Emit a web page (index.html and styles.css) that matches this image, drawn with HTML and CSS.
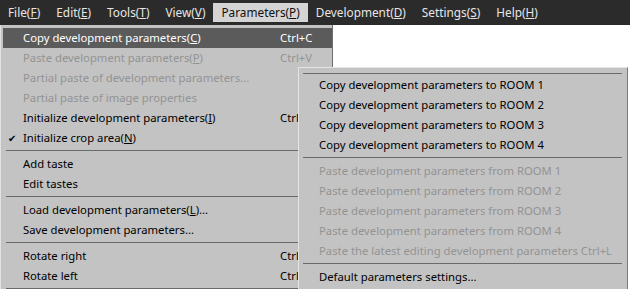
FILE: index.html
```html
<!DOCTYPE html>
<html lang="en">
<head>
    <meta charset="UTF-8">
    <title>Parameters menu</title>
    <link rel="stylesheet" href="styles.css">
</head>
<body>
<!-- Top menu bar -->
<nav class="menubar">
    <span class="bar-item">File(<u>F</u>)</span>
    <span class="bar-item">Edit(<u>E</u>)</span>
    <span class="bar-item">Tools(<u>T</u>)</span>
    <span class="bar-item">View(<u>V</u>)</span>
    <span class="bar-item open">Parameters(<u>P</u>)</span>
    <span class="bar-item">Development(<u>D</u>)</span>
    <span class="bar-item">Settings(<u>S</u>)</span>
    <span class="bar-item">Help(<u>H</u>)</span>
</nav>

<div class="stage">
    <!-- Parameters dropdown -->
    <ul class="menu main-menu">
        <li class="item active"><span class="label">Copy development parameters(<u>C</u>)</span><span class="key">Ctrl+C</span></li>
        <li class="item disabled"><span class="label">Paste development parameters(<u>P</u>)</span><span class="key">Ctrl+V</span></li>
        <li class="item disabled"><span class="label">Partial paste of development parameters...</span></li>
        <li class="item disabled"><span class="label">Partial paste of image properties</span></li>
        <li class="item"><span class="label">Initialize development parameters(<u>I</u>)</span><span class="key">Ctrl+R</span></li>
        <li class="item checked"><span class="label">Initialize crop area(<u>N</u>)</span></li>
        <li class="sep"></li>
        <li class="item"><span class="label">Add taste</span></li>
        <li class="item"><span class="label">Edit tastes</span></li>
        <li class="sep"></li>
        <li class="item"><span class="label">Load development parameters(<u>L</u>)...</span></li>
        <li class="item"><span class="label">Save development parameters...</span></li>
        <li class="sep"></li>
        <li class="item"><span class="label">Rotate right</span><span class="key">Ctrl+]</span></li>
        <li class="item"><span class="label">Rotate left</span><span class="key">Ctrl+[</span></li>
        <li class="sep"></li>
    </ul>

    <!-- Room submenu, drawn over the main dropdown -->
    <ul class="menu sub-menu">
        <li class="sep top"></li>
        <li class="item"><span class="label">Copy development parameters to ROOM 1</span></li>
        <li class="item"><span class="label">Copy development parameters to ROOM 2</span></li>
        <li class="item"><span class="label">Copy development parameters to ROOM 3</span></li>
        <li class="item"><span class="label">Copy development parameters to ROOM 4</span></li>
        <li class="sep"></li>
        <li class="item disabled"><span class="label">Paste development parameters from ROOM 1</span></li>
        <li class="item disabled"><span class="label">Paste development parameters from ROOM 2</span></li>
        <li class="item disabled"><span class="label">Paste development parameters from ROOM 3</span></li>
        <li class="item disabled"><span class="label">Paste development parameters from ROOM 4</span></li>
        <li class="item disabled"><span class="label">Paste the latest editing development parameters Ctrl+L</span></li>
        <li class="sep"></li>
        <li class="item"><span class="label">Default parameters settings...</span></li>
    </ul>
</div>
</body>
</html>
```

FILE: styles.css
```css
body {
    margin: 0;
    background-color: #fff;
    font-family: "Noto Sans", "Open Sans", sans-serif;
    font-size: 11.3px;
    overflow: hidden;
}

u {
    text-decoration: underline;
    text-underline-offset: 1px;
}

/* Menu bar */
.menubar {
    display: flex;
    align-items: center;
    height: 25px;
    background-color: #2b2b2b;
    color: #e6e6e6;
    font-size: 11.8px;
    box-sizing: border-box;
}

.bar-item {
    padding: 2px 8px;
    line-height: 15px;
}

.bar-item.open {
    background-color: #d4d4d4;
    color: #111;
}

/* Dropdown panels */
.stage {
    position: relative;
}

.menu {
    list-style: none;
    margin: 0;
    background-color: #c3c3c3;
    color: #000;
}

.main-menu {
    width: 333px;
    padding: 3px 0 0 2px;
    box-sizing: border-box;
    border-left: 1px solid #e2e2e2;
    border-right: 1px solid #6e6e6e;
}

.item {
    display: flex;
    justify-content: space-between;
    height: 20px;
    line-height: 20px;
    padding-left: 20px;
    position: relative;
    white-space: nowrap;
}

.main-menu .item {
    padding-right: 12px;
}

.item.active {
    background-color: #5b5b5b;
    color: #fff;
}

.item.disabled {
    color: #939393;
}

.item.checked::before {
    content: "\2714";
    position: absolute;
    left: 5px;
    font-size: 10px;
}

.key {
    width: 40px;
}

.sep {
    height: 1px;
    margin: 2px 0 3px 3px;
    background-color: #6a6a6a;
}

.sub-menu {
    position: absolute;
    left: 298px;
    top: 42px;
    width: 330px;
    padding: 5px 0 3px;
    box-sizing: border-box;
    border: 1px solid #e4e4e4;
    border-right-color: #7a7a7a;
    border-bottom-color: #555;
}

.sub-menu .item {
    padding-left: 20px;
}

.sub-menu .sep {
    margin: 2px 5px 3px 4px;
}

.sub-menu .sep.top {
    margin-top: 0;
    margin-bottom: 1px;
}
```
